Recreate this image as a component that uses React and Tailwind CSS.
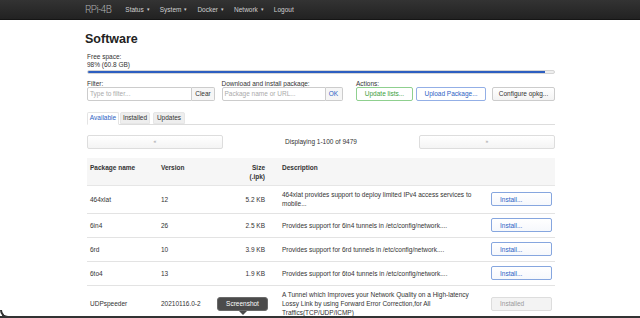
const rows = [
  { name: "464xlat", ver: "12", size: "5.2 KB", desc: "464xlat provides support to deploy limited IPv4 access services to mobile...", installed: false },
  { name: "6in4", ver: "26", size: "2.5 KB", desc: "Provides support for 6in4 tunnels in /etc/config/network....", installed: false },
  { name: "6rd", ver: "10", size: "3.9 KB", desc: "Provides support for 6rd tunnels in /etc/config/network....", installed: false },
  { name: "6to4", ver: "13", size: "1.9 KB", desc: "Provides support for 6to4 tunnels in /etc/config/network....", installed: false },
  { name: "UDPspeeder", ver: "20210116.0-2", size: "", desc: "A Tunnel which Improves your Network Quality on a High-latency Lossy Link by using Forward Error Correction,for All Traffics(TCP/UDP/ICMP)", installed: true },
];

function NavItem({ label, caret = true }) {
  return (
    <span className="flex items-center whitespace-nowrap">
      {label}
      {caret && <span className="ml-[3px] text-[5px]">▾</span>}
    </span>
  );
}

export default function App() {
  return (
    <div className="relative w-[640px] h-[318px] overflow-hidden bg-white text-[#333] text-[6.5px] font-['Liberation_Sans',Arial,sans-serif]">
      {/* Navbar */}
      <div className="h-[20px] bg-linear-to-b from-[#333] to-[#222] border-b border-[#151515] flex items-center pl-[85px]">
        <span className="text-[10px] font-light text-[#b0b0b0] tracking-[-0.5px] font-['Roboto',sans-serif]">RPi-4B</span>
        <div className="ml-[14px] flex items-center gap-[10px] text-[#cfcfcf]">
          <NavItem label="Status" />
          <NavItem label="System" />
          <NavItem label="Docker" />
          <NavItem label="Network" />
          <NavItem label="Logout" caret={false} />
        </div>
      </div>

      <div className="ml-[87px] w-[468px]">
        <h2 className="-ml-[2px] mt-[12px] text-[12.5px] leading-[15px] font-bold text-[#222]">Software</h2>

        <div className="mt-[6px] leading-[8px]">Free space:</div>
        <div className="leading-[8px]">98% (60.8 GB)</div>
        <div className="mt-[0.5px] h-[4px] w-[468px] rounded-[2px] border border-[#d5d5d5] bg-[#eee] overflow-hidden">
          <div className="h-full w-[98%] bg-[#2d5ec0]" />
        </div>

        {/* Controls */}
        <div className="mt-[6px] flex">
          <div className="w-[136px]">
            <div className="leading-[7px] h-[7px]">Filter:</div>
            <div className="flex h-[14px]">
              <div className="w-[105px] h-full border border-[#ccc] rounded-l-[2px] flex items-center pl-[2px] text-[#aaa]">Type to filter...</div>
              <div className="w-[23px] h-full border border-l-0 border-[#ccc] rounded-r-[2px] bg-[#f6f6f6] flex items-center justify-center text-[#333]">Clear</div>
            </div>
          </div>
          <div className="w-[136px]">
            <div className="leading-[7px] h-[7px]">Download and install package:</div>
            <div className="flex h-[14px]">
              <div className="w-[104px] h-full border border-[#ccc] rounded-l-[2px] flex items-center pl-[2px] text-[#aaa]">Package name or URL...</div>
              <div className="w-[17px] h-full border border-l-0 border-[#ccc] rounded-r-[2px] bg-[#f6f6f6] flex items-center justify-center text-[#2d62c4]">OK</div>
            </div>
          </div>
          <div className="flex-1">
            <div className="leading-[7px] h-[7px]">Actions:</div>
            <div className="flex h-[14px] gap-[3px]">
              <div className="w-[57px] h-full border border-[#8fd08f] rounded-[2px] flex items-center justify-center text-[#3c9e3c]">Update lists...</div>
              <div className="w-[70px] h-full border border-[#93afe6] rounded-[2px] flex items-center justify-center text-[#2d62c4]">Upload Package...</div>
              <div className="ml-[3px] w-[63px] h-full border border-[#ccc] rounded-[2px] bg-linear-to-b from-white to-[#f3f3f3] flex items-center justify-center text-[#333]">Configure opkg...</div>
            </div>
          </div>
        </div>

        {/* Tabs */}
        <div className="mt-[11px] flex border-b border-[#ddd] h-[13px]">
          <div className="w-[32px] h-[13px] border border-[#e4e4e4] border-b-white bg-white rounded-t-[2px] flex items-center justify-center text-[#2d62c4]">Available</div>
          <div className="ml-[1px] w-[30px] h-[12px] bg-[#eee] border border-[#e6e6e6] rounded-t-[2px] flex items-center justify-center">Installed</div>
          <div className="ml-[3px] w-[32px] h-[12px] bg-[#eee] border border-[#e6e6e6] rounded-t-[2px] flex items-center justify-center">Updates</div>
        </div>

        {/* Pagination */}
        <div className="mt-[10px] flex items-center h-[14px]">
          <div className="w-[136px] h-full border border-[#ddd] rounded-[2px] bg-linear-to-b from-white to-[#f4f4f4] flex items-center justify-center text-[#999] text-[5px]">«</div>
          <div className="flex-1 text-center">Displaying 1-100 of 9479</div>
          <div className="w-[136px] h-full border border-[#ddd] rounded-[2px] bg-linear-to-b from-white to-[#f4f4f4] flex items-center justify-center text-[#999] text-[5px]">»</div>
        </div>

        {/* Table */}
        <div className="mt-[9px]">
          <div className="grid grid-cols-[71px_62px_50px_215px_70px] bg-[#f6f6f6] font-bold text-[#333] leading-[9.5px] pt-[5px] pb-[3px] border-b border-[#e6e6e6]">
            <div className="pl-[3px]">Package name</div>
            <div className="pl-[3px]">Version</div>
            <div className="pr-[5px] text-right">Size<br />(.ipk)</div>
            <div className="pl-[12px]">Description</div>
            <div />
          </div>
          {rows.map((r, i) => (
            <div key={r.name} className={`grid grid-cols-[71px_62px_50px_215px_70px] items-center py-[4.5px] leading-[9px] ${i > 0 ? "border-t border-[#e3e3e3]" : ""}`}>
              <div className="pl-[3px]">{r.name}</div>
              <div className="pl-[3px]">{r.ver}</div>
              <div className="pr-[5px] text-right">{r.size}</div>
              <div className="pl-[12px] pr-[8px]">{r.desc}</div>
              <div className="pl-[6px]">
                {r.installed ? (
                  <div className="w-[61px] h-[14px] border border-[#ddd] rounded-[2px] bg-[#f3f3f3] flex items-center pl-[8px] text-[#9a9a9a]">Installed</div>
                ) : (
                  <div className="w-[61px] h-[14px] border border-[#86a6df] rounded-[2px] bg-linear-to-b from-white to-[#f6f8fc] flex items-center pl-[8px] text-[#2d62c4]">Install...</div>
                )}
              </div>
            </div>
          ))}
        </div>
      </div>

      {/* Tooltip overlay */}
      <div className="absolute left-[217px] top-[297px] w-[51px] h-[14px] rounded-[3px] bg-[#4b4b4b] border border-[#6a6a6a] flex items-center justify-center text-white text-[6.5px]">Screenshot</div>
      <div className="absolute left-[239px] top-[311px] w-0 h-0 border-l-[4px] border-r-[4px] border-t-[4px] border-l-transparent border-r-transparent border-t-[#4b4b4b]" />

      {/* window bottom edge */}
      <div className="absolute bottom-0 left-0 right-0 h-[2px] bg-[#333]" />
      <div className="absolute bottom-0 left-0 w-[8px] h-[8px] border-l-[2px] border-b-[2px] border-[#333] rounded-bl-[8px]" />
    </div>
  );
}
